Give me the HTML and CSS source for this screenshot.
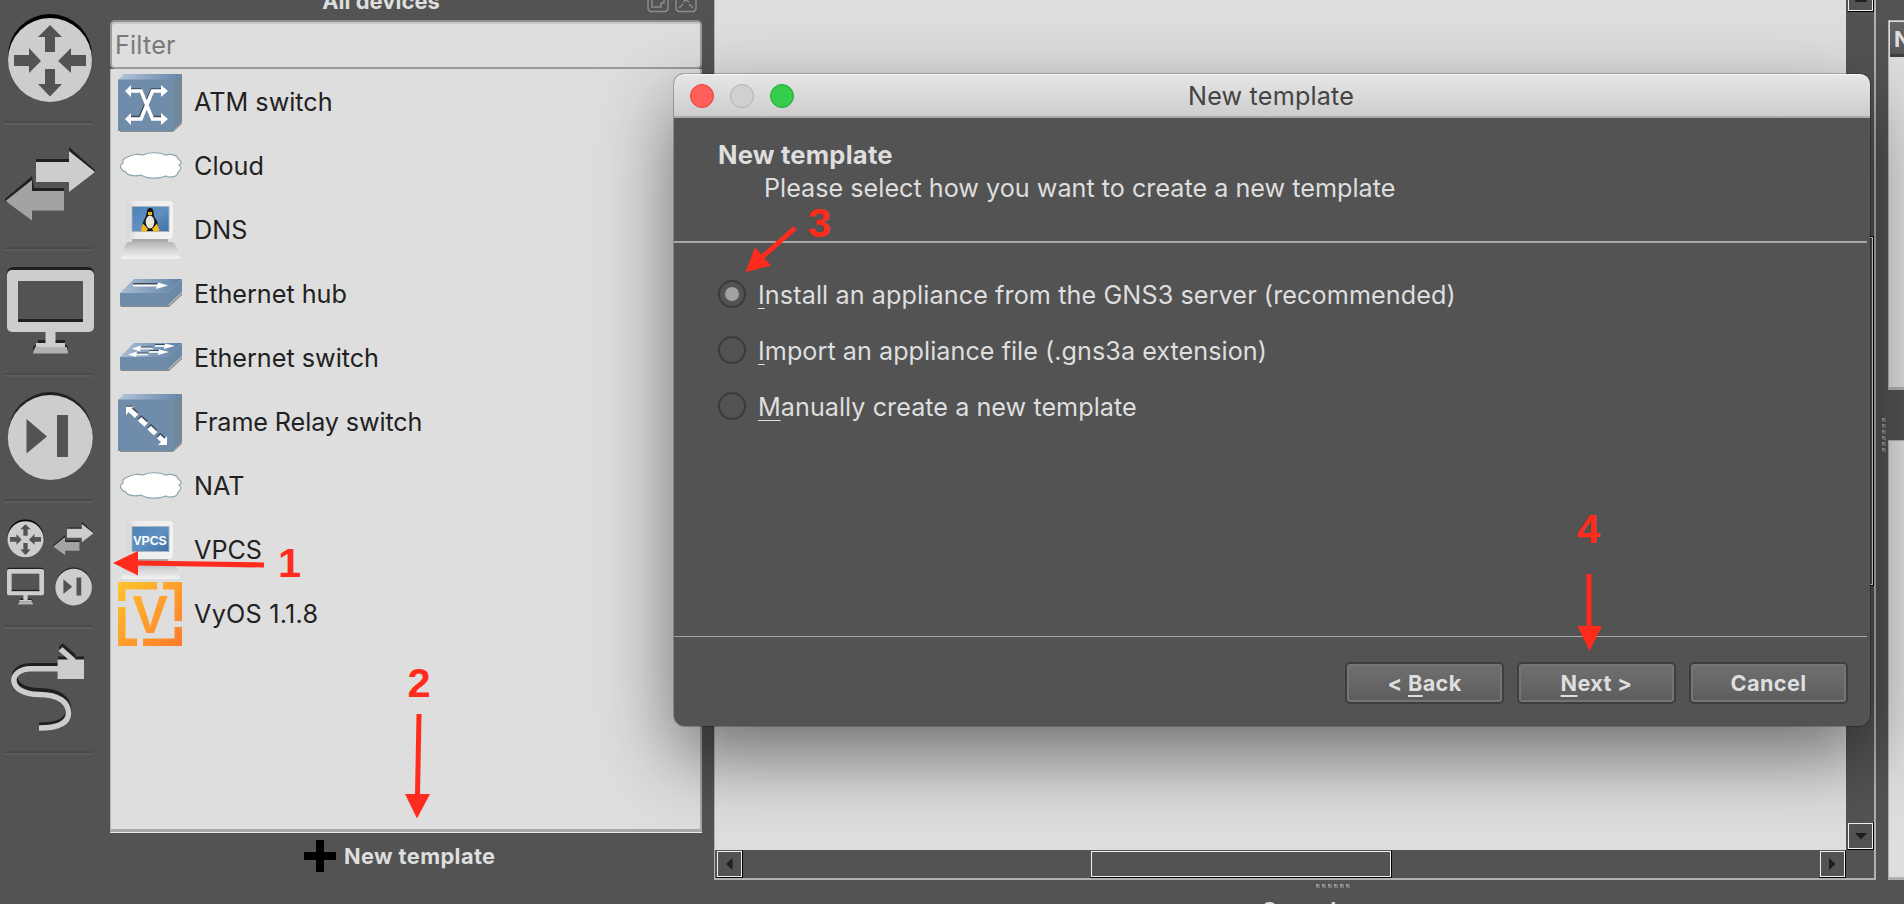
FILE: index.html
```html
<!DOCTYPE html>
<html lang="en">
<head>
<meta charset="utf-8">
<title>GNS3 - New template</title>
<link rel="stylesheet" href="styles.css">
</head>
<body>
<svg class="defs" width="0" height="0">
  <defs>
    <linearGradient id="gTop" x1="0" x2="1"><stop offset="0" stop-color="#b3c5da"/><stop offset="1" stop-color="#6483a6"/></linearGradient>
    <linearGradient id="gSlab" x1="0" x2="1"><stop offset="0" stop-color="#a9bdd2"/><stop offset="1" stop-color="#5f82a8"/></linearGradient>
    <linearGradient id="gScreen" x1="0" x2="1" y1="0" y2="1"><stop offset="0" stop-color="#4a7fb4"/><stop offset=".5" stop-color="#5f92c2"/><stop offset="1" stop-color="#3d6fa5"/></linearGradient>
    <linearGradient id="gBase" x1="0" x2="0" y1="0" y2="1"><stop offset="0" stop-color="#b4b4b4"/><stop offset=".5" stop-color="#d6d6d6"/><stop offset="1" stop-color="#f3f3f3"/></linearGradient>
    <linearGradient id="gCase" x1="0" x2="1"><stop offset="0" stop-color="#d6d6d6"/><stop offset=".2" stop-color="#ececec"/><stop offset="1" stop-color="#f2f2f2"/></linearGradient>
    <linearGradient id="gVyos" gradientUnits="userSpaceOnUse" x1="0" y1="0" x2="64" y2="64"><stop offset="0" stop-color="#ffc52e"/><stop offset="1" stop-color="#ff7a2b"/></linearGradient>
    <symbol id="router" viewBox="7 13 86 90">
      <circle cx="50" cy="56" r="42" fill="#000"/><circle cx="50" cy="60" r="42" fill="#cdcdcd"/>
      <path fill="#535353" d="M50 25 62 37H55V52H45V37H38ZM50 96.500 38 84H45V69H55V84H62ZM14 55H29V48L41 61 29 73V66H14ZM86 55H71V48L58 61 71 73V66H86Z"/>
    </symbol>
    <symbol id="swap" viewBox="5 146 91 76">
      <path fill="#231f20" d="M36 159H69V147L95 170V173L60 175H36ZM64 188H34L32 176 5 199V202L30 206H64Z"/>
      <path fill="#cdcdcd" d="M36 162H69V151L95 172 69 192V182H36Z"/>
      <path fill="#a1a3a5" d="M64 191H32V180L5.500 201 32 220.500V210.500H64Z"/>
    </symbol>
    <symbol id="monitor" viewBox="7 266 87 88">
      <rect x="7" y="267" width="87" height="60" rx="6" fill="#231f20"/>
      <path fill="#231f20" d="M38 340H65V344L68 347V350H33V347L38 343Z"/>
      <rect x="7" y="270" width="87" height="62" rx="5" fill="#cdcdcd"/>
      <rect x="18" y="281" width="65" height="41" fill="#535353"/>
      <path fill="#231f20" d="M18 319H83V322H18Z"/>
      <path fill="#cdcdcd" d="M45.500 331H55.500V343H65V347H36V343H45.500Z"/>
      <path fill="#b0b2b2" d="M35 347H67L68 353.500H33Z"/>
    </symbol>
    <symbol id="skip" viewBox="7 391 86 90">
      <circle cx="50.300" cy="434" r="42" fill="#231f20"/><circle cx="50.300" cy="437.500" r="42.500" fill="#cdcdcd"/>
      <path fill="#535353" d="M26.500 419 47 436.500 26.500 453.500ZM57 415H68V457H57Z"/>
    </symbol>
    <symbol id="cloud" viewBox="0 0 64 30">
      <path fill="#fff" stroke="#8ca5ac" stroke-width="1.200" d="M10 6C14 3 21 3 25 4 31 1 42 1 47 4 54 2 60 5 60 8 64 10 64 13 61 14 65 17 61 20 60 21 60 26 52 27 48 25 41 28 29 28 23 24 16 26 9 24 8 21 2 19 1 14 5 12 4 9 6 7 10 6Z"/>
    </symbol>
    <symbol id="pc" viewBox="0 0 64 64">
      <rect x="9" y="3" width="46" height="38" rx="4" fill="url(#gCase)"/>
      <rect x="14" y="8.500" width="37" height="25" fill="url(#gScreen)" stroke="#a9b4bd" stroke-width="1"/>
      <path d="M14 41H50V44H14Z" fill="#aaa"/>
      <path d="M10 44H54Q57 44 62 58V60Q62 61 59 61H5Q2 61 3 58Q8 44 10 44Z" fill="url(#gBase)"/>
    </symbol>
  </defs>
</svg>

<div class="app">
  <nav class="toolbar">
    <svg class="tool first" viewBox="0 0 100 121"><use href="#router" x="7" y="13" width="86" height="90"/></svg>
    <i class="rule"></i>
    <svg class="tool" viewBox="0 125 100 122"><use href="#swap" x="5" y="146" width="91" height="76"/></svg>
    <i class="rule"></i>
    <svg class="tool" viewBox="0 251 100 122"><use href="#monitor" x="7" y="266" width="87" height="88"/></svg>
    <i class="rule"></i>
    <svg class="tool" viewBox="0 377 100 122"><use href="#skip" x="7" y="391" width="86" height="90"/></svg>
    <i class="rule"></i>
    <svg class="tool" viewBox="0 503 100 122">
      <use href="#router" x="7" y="519" width="37" height="38.700"/><use href="#swap" x="53" y="521.500" width="41" height="34.500"/>
      <use href="#monitor" x="7" y="567" width="37" height="38"/><use href="#skip" x="55" y="567" width="37" height="39"/>
    </svg>
    <i class="rule"></i>
    <svg class="tool" viewBox="0 629 100 122">
      <g fill="none" stroke-width="6">
        <g stroke="#231f20"><path d="M58 666H31C8 666 8 691 39 691 60 691 68.500 700 68.500 710 68.500 721 57 725.500 39 725.500"/><path d="M60.500 645.500 74 657"/></g>
        <path stroke="#231f20" d="M58 659.500H84"/>
        <g stroke="#cdcdcd" stroke-width="5.500"><path d="M60 668.700H31C7 668.700 7 694.500 39 694.500 60 694.500 68.500 703 68.500 713 68.500 724 57 728 39 728"/><path d="M60.500 649 74 661"/></g>
      </g>
      <rect x="57.600" y="659.500" width="26.400" height="19.500" fill="#cdcdcd"/>
    </svg>
    <i class="rule"></i>
  </nav>

  <section class="devices">
    <header class="dock-title"><span>All devices</span>
      <svg class="dock-buttons" width="52" height="13" viewBox="0 0 52 13" fill="none" stroke="#8d8b86" stroke-width="1.500"><path d="M1 0V9L3 11.500H19L21 9V0M5 0V7H14V3H17V0M29 0V9L31 11.500H47L49 9V0M32 8 36 4M46 8 42 4M36 2 39 0 42 2"/></svg>
    </header>
    <div class="filter"><span>Filter</span></div>
    <ul class="list">
      <li><svg class="dev" viewBox="0 0 64 64"><path fill="url(#gTop)" d="M0 10 6 4H64L56 10Z"/><path fill="#70869b" d="M55 10 64 4V52L55 61Z"/><path d="M2 61.500H55L64 53" stroke="#8d8d8d" stroke-width="1.200" fill="none"/><rect y="9.500" width="55.500" height="51.500" fill="#6f8dab"/>
        <g fill="none" stroke="#3c4c5c" stroke-width="3.500"><path d="M12 20H22L34 47.500H44M12 47.500H22L34 20H44"/></g><g fill="none" stroke="#fff" stroke-width="3.600"><path d="M13 21H23L34.500 49H45M13 49H23L34.500 21H45"/></g><path fill="#fff" d="M7 21 13 15V27ZM50 21 43 15V27ZM7 49 13 43V55ZM50 49 43 43V55Z"/></svg><span>ATM switch</span></li>
      <li><svg class="dev" viewBox="0 0 64 64"><use href="#cloud" y="17" width="64" height="30"/></svg><span>Cloud</span></li>
      <li><svg class="dev" viewBox="0 0 64 64"><use href="#pc" width="64" height="64"/><path fill="#151515" d="M32 10C37 10 34.500 16 37 20 41 25 41 31 36 33H28C23 31 24 25 27 20 29.500 16 28 10 32 10Z"/><ellipse cx="32" cy="24" rx="4.300" ry="6.500" fill="#e9e6e1"/><path fill="#f5b81f" d="M30 14H34V17H30ZM25 25.500 30 31 28 34 22.500 32.500ZM39 25.500 34 31 36 34 41.500 32.500Z"/></svg><span>DNS</span></li>
      <li><svg class="dev" viewBox="0 0 64 64"><path fill="#8a8a8a" d="M2 43H51L64 31V33L51 45H3Z"/><path fill="url(#gSlab)" d="M2 31 16 17H64L49 31Z"/><path fill="#6c89a6" d="M49 31 64 17V30L49 44Z"/><path fill="#6f8dab" d="M2 31H49V44H2Z"/><path d="M15 22.500H42" stroke="#3c4c5c" stroke-width="3"/><path d="M15 23.500H42" stroke="#fff" stroke-width="2"/><path fill="#fff" d="M40 20.500 50 23.500 38 27Z"/></svg><span>Ethernet hub</span></li>
      <li><svg class="dev" viewBox="0 0 64 64"><path fill="#8a8a8a" d="M2 43H51L64 31V33L51 45H3Z"/><path fill="url(#gSlab)" d="M2 31 16 17H64L49 31Z"/><path fill="#6c89a6" d="M49 31 64 17V30L49 44Z"/><path fill="#6f8dab" d="M2 31H49V44H2Z"/><path d="M37 19H50M21 21.500H35M31 25H44M17 27.500H30" stroke="#3c4c5c" stroke-width="2"/><path d="M37 20H50M21 22.500H35M31 26H44M17 28.500H30" stroke="#e8edf2" stroke-width="1.800"/><path fill="#fff" d="M47 17.500 57 20 46 23ZM23 19.500 14 22.500 22 25.500ZM41 23.500 51 26 40 29ZM19 25.500 10 28.500 18 31Z"/></svg><span>Ethernet switch</span></li>
      <li><svg class="dev" viewBox="0 0 64 64"><path fill="url(#gTop)" d="M0 10 6 4H64L56 10Z"/><path fill="#70869b" d="M55 10 64 4V52L55 61Z"/><path d="M2 61.500H55L64 53" stroke="#8d8d8d" stroke-width="1.200" fill="none"/><rect y="9.500" width="55.500" height="51.500" fill="#6f8dab"/><path d="M12 18 46 49.500" stroke="#3c4c5c" stroke-width="5" stroke-dasharray="9 4"/><path d="M12 20 46 51.500" stroke="#fff" stroke-width="5" stroke-dasharray="9 4"/><path fill="#fff" d="M8 16H16L8 25ZM49 55H40L49 46Z"/><path d="M8 16H15" stroke="#777" stroke-width="2"/></svg><span class="frame">Frame Relay switch</span></li>
      <li><svg class="dev" viewBox="0 0 64 64"><use href="#cloud" y="17" width="64" height="30"/></svg><span>NAT</span></li>
      <li><svg class="dev" viewBox="0 0 64 64"><use href="#pc" width="64" height="64"/><text x="32" y="26.500" class="vpcs">VPCS</text></svg><span>VPCS</span></li>
      <li><svg class="dev" viewBox="0 0 64 64"><path fill="url(#gVyos)" d="M0 0H39V7.500H7.500V19H0ZM45 0H64V39H56.500V7.500H45ZM64 45V64H25V56.500H56.500V45ZM0 25H7.500V56.500H19V64H0Z"/><text x="32" y="50.500" class="vyos" fill="url(#gVyos)">V</text></svg><span class="version">VyOS 1.1.8</span></li>
    </ul>
    <footer class="new-template"><svg width="32" height="32" viewBox="0 0 32 32"><path d="M12 0H20V12H32V20H20V32H12V20H0V12H12Z"/></svg><span>New template</span></footer>
  </section>

  <main class="center">
    <div class="workspace">
      <div class="canvas"></div>
      <div class="vbar"><i class="sbtn up"><svg width="12" height="2"><path d="M0 2V1L1 0H11L12 1V2Z"/></svg></i><i class="vthumb"></i><i class="sbtn"><svg width="12" height="7"><path d="M0 0H12L6 6.500Z"/></svg></i></div>
      <div class="hbar"><i class="sbtn"><svg width="7" height="12"><path d="M6.500 0V12L0 6Z"/></svg></i><i class="hthumb"></i><i class="sbtn"><svg width="7" height="12"><path d="M0 0V12L6.500 6Z"/></svg></i></div>
      <div class="corner"></div>
    </div>
    <div class="grip-h"><b></b><b></b><b></b><b></b><b></b><b></b></div>
    <div class="console">Console</div>
  </main>

  <div class="grip-v"><b></b><b></b><b></b><b></b><b></b><b></b></div>
  <aside class="right">
    <div class="panel nodes"><div class="col">Node</div></div>
    <div class="panel servers"></div>
  </aside>
</div>

<div class="dialog">
  <div class="titlebar"><i class="light red"></i><i class="light off"></i><i class="light green"></i><span>New template</span></div>
  <div class="head"><h1>New template</h1><p>Please select how you want to create a new template</p></div>
  <div class="options">
    <label><i class="radio on"></i><span class="o1"><u>I</u>nstall an appliance from the GNS3 server (recommended)</span></label>
    <label><i class="radio"></i><span><u>I</u>mport an appliance file (.gns3a extension)</span></label>
    <label><i class="radio"></i><span><u>M</u>anually create a new template</span></label>
  </div>
  <div class="buttons"><button><span>&lt; <u>B</u>ack</span></button><button><span><u>N</u>ext &gt;</span></button><button><span>Cancel</span></button></div>
</div>

<svg class="notes" width="1904" height="904" viewBox="0 0 1904 904">
  <g stroke="#ff2b1c" stroke-width="5"><path d="M264 565 136 563M419 714 417.500 796M795 228 760 259M1589 574V628"/></g>
  <path d="M113 563 138 551V575.500ZM405 794H430L417 818.500ZM745.500 272.300 755 247.500 771 265.500ZM1577.500 626H1602L1589.500 651Z"/>
  <text x="278" y="577">1</text><text x="407.500" y="697">2</text><text x="808" y="237">3</text><text x="1577" y="543">4</text>
</svg>
</body>
</html>
```
FILE: styles.css
```css
* { box-sizing: border-box; }
body {
  margin: 0; width: 1904px; height: 904px; overflow: hidden; position: relative;
  background: #535353; color: #dedede;
  font: 25.2px/32px Inter, "Liberation Sans", sans-serif;
}
.defs { position: absolute; }
svg, i, b { display: block; flex: none; }
.app { display: flex; width: 1904px; height: 904px; }

.toolbar { width: 110px; }
.tool { width: 100px; height: 122px; }
.tool.first { height: 121px; }
.rule { width: 88px; height: 4px; margin-left: 5px; border-top: 2px solid #4a4a4a; border-bottom: 2px solid #5c5c5c; }

.devices { width: 592px; display: flex; flex-direction: column; }
.dock-title { height: 20px; display: grid; grid-template-columns: 1fr; font-weight: 700; font-size: 22px; line-height: 20px; }
.dock-title span { grid-area: 1 / 1; justify-self: center; margin: -9px 0 0 -50px; }
.dock-buttons { grid-area: 1 / 1; justify-self: end; margin-right: 3px; }
.filter { height: 49px; border: 2px solid #9c9c9c; border-top-color: #8f8f8f; border-radius: 5px; background: #dedede; box-shadow: inset 0 2px 0 #c8c8c8; color: #7a7a7a; padding: 7px 0 0 3px; letter-spacing: .2px; }
.list { list-style: none; margin: 0; padding: 1px 0 0 7px; height: 763px; background: #dedede; border: 1px solid #b4b4b4; border-top: 0; border-right: 2px solid #a8a8a8; border-bottom: 3px solid #a8aaaa; box-shadow: 0 1px 0 #e8e8e8; color: #222; }
.list li { display: flex; align-items: center; gap: 12px; height: 64px; }
.list .frame { letter-spacing: -.12px; }
.list .version { letter-spacing: .25px; }
.dev { width: 64px; height: 64px; }
.vpcs { font: 700 12.3px "Liberation Sans", sans-serif; fill: #fff; text-anchor: middle; }
.vyos { font: 700 53.500px "Liberation Sans", sans-serif; text-anchor: middle; }
.new-template { display: flex; align-items: center; gap: 8px; height: 48px; padding-left: 194px; font-weight: 700; font-size: 21.8px; letter-spacing: .4px; }

.center { margin-left: 12px; width: 1162px; }
.workspace { height: 880px; display: grid; grid-template: 850px 28px / 1131px 28px; border: solid #b0b2b2; border-width: 0 2px 2px 1px; }
.canvas { background: #dedede; }
.vbar { display: flex; flex-direction: column; padding-left: 1px; }
.sbtn { width: 27px; height: 28px; border: 1px solid; border-color: #535353 #000 #000 #535353; box-shadow: inset 0 0 0 1px #f0f0f0; display: grid; place-items: center; fill: #1f1f1f; }
.sbtn.up { height: 12px; border-top: 0; place-items: start center; box-shadow: inset 1px -1px 0 #f0f0f0, inset -1px 0 0 #f0f0f0; }
.vthumb { height: 350px; margin: 224px 0 236px; border: 1px solid #000; box-shadow: inset 0 0 0 1px #eee; }
.hbar { display: flex; }
.hbar .sbtn:first-child { margin-left: 1px; }
.hthumb { width: 302px; height: 28px; margin: 0 427px 0 347px; border: 1px solid; border-color: #535353 #000 #000 #535353; box-shadow: inset 0 0 0 1px #f0f0f0; }
.grip-h { display: flex; gap: 2px; height: 12px; padding: 4px 0 0 602px; }
.grip-h b, .grip-v b { width: 4px; height: 4px; background: #a0a0a0; border: solid #787878; border-width: 0 2px 2px 0; }
.console { height: 12px; overflow: hidden; font-weight: 700; font-size: 22px; line-height: 27px; padding: 5px 0 0 547px; }

.grip-v { width: 12px; display: flex; flex-direction: column; gap: 2px; padding: 418px 0 0 6px; }
.right { width: 16px; padding-top: 20px; overflow: hidden; }
.panel { background: #dedede; border: solid #b0b0b0; border-width: 1px 0 3px 1px; }
.nodes { height: 370px; }
.servers { height: 440px; margin-top: 50px; }
.col { height: 35px; margin: 1px 0 0 1px; overflow: hidden; background: linear-gradient(#656565, #585858); border-bottom: 3px solid #3f3f3f; font-weight: 700; font-size: 22px; line-height: 34px; padding-left: 4px; }

.dialog { position: absolute; left: 674px; top: 74px; width: 1196px; height: 652px; border-radius: 10px 10px 11px 11px; background: #535353; box-shadow: 0 0 0 1px rgba(0,0,0,.22), 0 30px 76px rgba(0,0,0,.5); }
.titlebar { height: 44px; display: flex; align-items: center; gap: 16px; padding-left: 16px; background: linear-gradient(#e6e6e6, #cdcdcd); border-top: 1px solid #f8f8f8; border-bottom: 2px solid #a9abab; border-radius: 10px 10px 0 0; color: #444; }
.titlebar span { margin: 1px 0 0 378px; letter-spacing: .18px; }
.light { width: 24px; height: 24px; border-radius: 50%; border: 1px solid #e0443e; background: #ff605a; }
.light.off { background: #d0d0d0; border-color: #b2b2b2; }
.light.green { background: #35cb4b; border-color: #24a938; }
.head { height: 125px; margin-right: 3px; padding: 21px 0 0 44px; border-bottom: 2px solid #a5a7a7; }
.head h1 { font-size: 25.6px; line-height: 32px; margin: 0; letter-spacing: .2px; }
.head p { margin: 0 0 0 46px; padding-top: 1px; }
.options { height: 394px; margin-right: 3px; padding: 37px 0 0 44px; border-bottom: 1px solid #a5a7a7; }
.options label { display: flex; align-items: center; gap: 12px; height: 28px; margin-bottom: 28px; }
.options span { padding-top: 1px; letter-spacing: .03px; }
.options .o1 { letter-spacing: .09px; }
.radio { width: 28px; height: 28px; border: 2px solid #3b3b3b; border-radius: 50%; display: grid; place-items: center; }
.radio.on::before { content: ""; width: 14px; height: 14px; border-radius: 50%; background: #a2a2a2; }
u { text-decoration-thickness: 2px; text-underline-offset: 4px; text-decoration-skip-ink: none; }
.options u { text-decoration-thickness: 1px; }
.buttons { display: flex; justify-content: flex-end; gap: 13px; padding: 25px 22px 0 0; }
button { width: 159px; height: 42px; padding: 0; border: 2px solid #3e3e3e; border-radius: 5px; background: linear-gradient(#707070, #5c5c5c); box-shadow: inset 0 0 0 2px #757575; color: #dedede; font: 700 21.7px/36px Inter, sans-serif; letter-spacing: .35px; }
.notes { position: absolute; left: 0; top: 0; fill: #ff2b1c; font: 700 41.5px "Liberation Sans", sans-serif; }
```
